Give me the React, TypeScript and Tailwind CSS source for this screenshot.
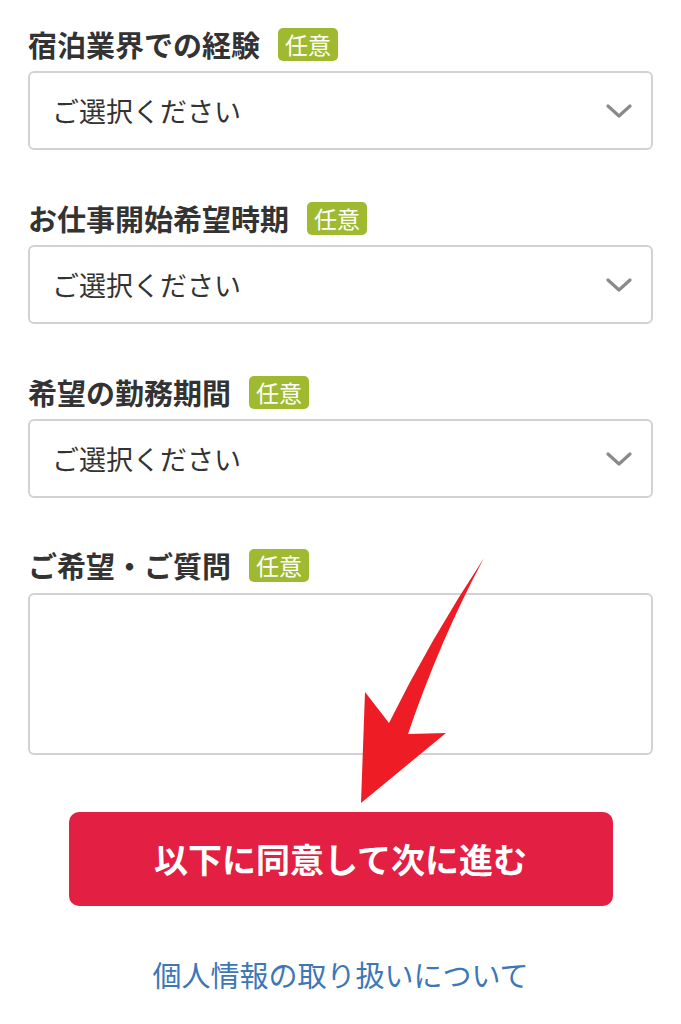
import React from "react";

const font = { fontFamily: '"Noto Sans CJK JP", "Noto Sans", sans-serif' };

function Label({ text }: { text: string }) {
  return (
    <div className="flex items-center h-[34px]">
      <span className="text-[29px] font-bold text-[#333333] leading-none tracking-[0px]">{text}</span>
      <span className="ml-[18px] h-[33px] w-[60px] rounded-[5px] bg-[#9fba30] text-white text-[23px] leading-none flex items-center justify-center">
        任意
      </span>
    </div>
  );
}

function Select() {
  return (
    <div className="mt-[10px] h-[79px] rounded-[6px] border-2 border-[#d2d2d2] bg-white flex items-center justify-between pl-[22px] pr-[19px]">
      <span className="text-[27px] text-[#333333] leading-none">ご選択ください</span>
      <svg width="26" height="16" viewBox="0 0 26 16">
        <polyline points="2,3 13,13 24,3" fill="none" stroke="#8a8a8a" strokeWidth="3.2" strokeLinecap="round" strokeLinejoin="round" />
      </svg>
    </div>
  );
}

export default function App() {
  return (
    <div className="relative w-[681px] h-[1024px] bg-white overflow-hidden" style={font}>
      <div className="px-[28px] pt-[27px]">
        <Label text="宿泊業界での経験" />
        <Select />
        <div className="mt-[51px]">
          <Label text="お仕事開始希望時期" />
          <Select />
        </div>
        <div className="mt-[51px]">
          <Label text="希望の勤務期間" />
          <Select />
        </div>
        <div className="mt-[50px]">
          <Label text="ご希望・ご質問" />
          <div className="mt-[11px] h-[162px] rounded-[6px] border-2 border-[#d2d2d2] bg-white" />
        </div>
        <div className="mt-[57px] flex justify-center">
          <div className="w-[544px] h-[94px] rounded-[10px] bg-[#e31f43] flex items-center justify-center">
            <span className="text-white text-[34px] font-bold leading-none">以下に同意して次に進む</span>
          </div>
        </div>
        <div className="mt-[54px] flex justify-center">
          <span className="text-[#3d77b6] text-[29px] leading-none">個人情報の取り扱いについて</span>
        </div>
      </div>
      <svg className="absolute left-0 top-0 pointer-events-none" width="681" height="1024" viewBox="0 0 681 1024">
        <path
          d="M484,558 Q440,640 408,734 L446,733 L361,803 L365,692 L389,723 Q430,640 484,558 Z"
          fill="#ee1c25"
        />
      </svg>
    </div>
  );
}
